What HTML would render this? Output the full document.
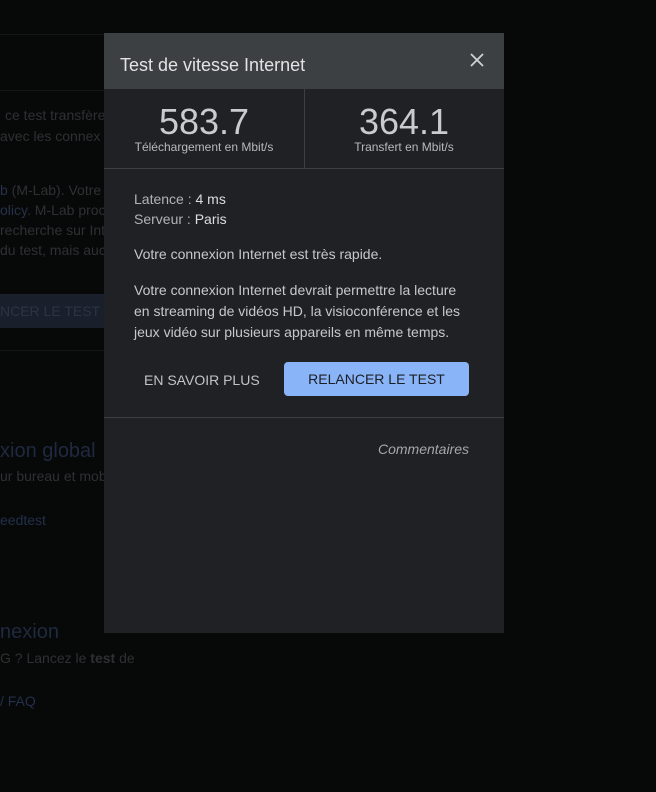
<!DOCTYPE html>
<html><head><meta charset="utf-8"><style>
*{margin:0;padding:0;box-sizing:border-box}
body{width:656px;height:792px;background:#070808;font-family:"Liberation Sans",Arial,sans-serif;position:relative;overflow:hidden}
.a{position:absolute;white-space:nowrap}
.bg{color:#2e3134;font-size:14px}
.hl{position:absolute;left:0;width:104px;height:1px;background:#151617}
.m{position:absolute;left:104px;top:33px;width:400px;height:600px;background:#202124}
.hd{height:56px;background:#3c4043;position:relative}
.hd .t{position:absolute;left:16px;top:22px;font-size:18px;color:#e3e3e3}
.big{font-size:36px;color:#c8cbd0;text-align:center;position:absolute;top:70px;line-height:38px}
.sub{font-size:12px;color:#b6b9bd;text-align:center;position:absolute;top:107px}
.tx{font-size:14px;color:#c5c8cc;position:absolute;left:30px}
</style></head><body>
<div class="hl" style="top:34px"></div>
<div class="hl" style="top:90px"></div>
<div class="hl" style="top:350px"></div>
<div class="a bg" style="left:5px;top:107px">ce test transfère</div>
<div class="a bg" style="left:0;top:128px">avec les connex</div>
<div class="a bg" style="left:0;top:182px"><span style="color:#26324a">b</span> (M-Lab). Votre</div>
<div class="a bg" style="left:0;top:202px"><span style="color:#26324a">olicy</span>. M-Lab proc</div>
<div class="a bg" style="left:0;top:222px">recherche sur Inte</div>
<div class="a bg" style="left:0;top:242px">du test, mais auc</div>
<div class="a" style="left:0;top:294px;width:104px;height:34px;background:#19202c"></div>
<div class="a" style="left:0;top:303px;font-size:14px;color:#2b3442">NCER LE TEST D</div>
<div class="a" style="left:0;top:440px;font-size:20px;color:#1f2a40">xion global</div>
<div class="a bg" style="left:0;top:468px">ur bureau et mob</div>
<div class="a" style="left:0;top:512px;font-size:14px;color:#23304a">eedtest</div>
<div class="a" style="left:0;top:621px;font-size:20px;color:#1f2a40">nexion</div>
<div class="a bg" style="left:0;top:650px">G ? Lancez le <b>test</b> de</div>
<div class="a" style="left:0;top:693px;font-size:14px;color:#23304a">/ FAQ</div>

<div class="m">
 <div class="hd"><div class="t">Test de vitesse Internet</div>
  <svg style="position:absolute;left:366px;top:20px" width="14" height="14" viewBox="0 0 14 14"><path d="M1 1L13 13M13 1L1 13" stroke="#d0d2d5" stroke-width="1.8"/></svg>
 </div>
 <div style="position:absolute;left:200px;top:56px;width:1px;height:79px;background:#3c3e42"></div>
 <div style="position:absolute;left:0;top:135px;width:400px;height:1px;background:#3c3e42"></div>
 <div class="big" style="left:0;width:200px">583.7</div>
 <div class="sub" style="left:0;width:200px">Téléchargement en Mbit/s</div>
 <div class="big" style="left:200px;width:200px">364.1</div>
 <div class="sub" style="left:200px;width:200px">Transfert en Mbit/s</div>
 <div class="tx" style="top:158px;color:#b0b3b8">Latence : <span style="color:#dcdde0">4 ms</span></div>
 <div class="tx" style="top:178px;color:#b0b3b8">Serveur : <span style="color:#dcdde0">Paris</span></div>
 <div class="tx" style="top:213px">Votre connexion Internet est très rapide.</div>
 <div class="tx" style="top:247px;line-height:21px">Votre connexion Internet devrait permettre la lecture<br>en streaming de vidéos HD, la visioconférence et les<br>jeux vidéo sur plusieurs appareils en même temps.</div>
 <div class="a" style="left:40px;top:339px;font-size:14px;color:#c0c3c7">EN SAVOIR PLUS</div>
 <div class="a" style="left:180px;top:329px;width:185px;height:34px;background:#8ab4f8;border-radius:4px;color:#1c1f24;font-size:14px;text-align:center;line-height:34px">RELANCER LE TEST</div>
 <div style="position:absolute;left:0;top:384px;width:400px;height:1px;background:#3c3e42"></div>
 <div class="a" style="right:35px;top:408px;font-size:14px;font-style:italic;color:#a4a7ac">Commentaires</div>
</div>
</body></html>
